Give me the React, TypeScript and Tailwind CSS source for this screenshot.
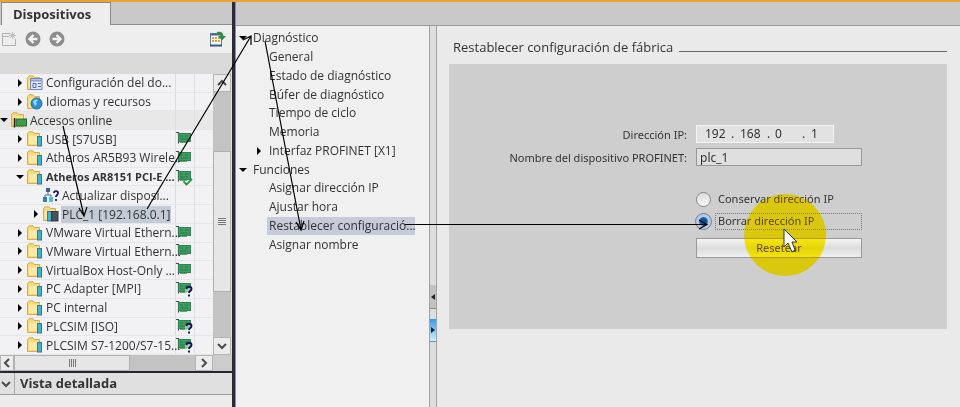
import React, { ReactNode } from "react";

type Badge = "none" | "card" | "ok" | "unknown";
type Kind = "config" | "lang" | "online" | "device" | "update" | "plc";
type Row = {
  label: string;
  kind: Kind;
  level: 0 | 1 | 2;
  arrow?: "right" | "down";
  badge?: Badge;
  bold?: boolean;
  selected?: boolean;
};

const rows: Row[] = [
  { label: "Configuración del do...", kind: "config", level: 1, arrow: "right" },
  { label: "Idiomas y recursos", kind: "lang", level: 1, arrow: "right" },
  { label: "Accesos online", kind: "online", level: 0, arrow: "down" },
  { label: "USB [S7USB]", kind: "device", level: 1, arrow: "right", badge: "card" },
  { label: "Atheros AR5B93 Wirele...", kind: "device", level: 1, arrow: "right", badge: "card" },
  { label: "Atheros AR8151 PCI-E ...", kind: "device", level: 1, arrow: "down", badge: "ok", bold: true },
  { label: "Actualizar disposi...", kind: "update", level: 2 },
  { label: "PLC_1 [192.168.0.1]", kind: "plc", level: 2, arrow: "right", selected: true },
  { label: "VMware Virtual Ethern...", kind: "device", level: 1, arrow: "right", badge: "card" },
  { label: "VMware Virtual Ethern...", kind: "device", level: 1, arrow: "right", badge: "card" },
  { label: "VirtualBox Host-Only ...", kind: "device", level: 1, arrow: "right", badge: "card" },
  { label: "PC Adapter [MPI]", kind: "device", level: 1, arrow: "right", badge: "unknown" },
  { label: "PC internal", kind: "device", level: 1, arrow: "right", badge: "card" },
  { label: "PLCSIM [ISO]", kind: "device", level: 1, arrow: "right", badge: "unknown" },
  { label: "PLCSIM S7-1200/S7-15...", kind: "device", level: 1, arrow: "right", badge: "unknown" },
];

type NavItem = { label: string; level: 0 | 1; arrow?: "right" | "down"; selected?: boolean };

const nav: NavItem[] = [
  { label: "Diagnóstico", level: 0, arrow: "down" },
  { label: "General", level: 1 },
  { label: "Estado de diagnóstico", level: 1 },
  { label: "Búfer de diagnóstico", level: 1 },
  { label: "Tiempo de ciclo", level: 1 },
  { label: "Memoria", level: 1 },
  { label: "Interfaz PROFINET [X1]", level: 1, arrow: "right" },
  { label: "Funciones", level: 0, arrow: "down" },
  { label: "Asignar dirección IP", level: 1 },
  { label: "Ajustar hora", level: 1 },
  { label: "Restablecer configuració...", level: 1, selected: true },
  { label: "Asignar nombre", level: 1 },
];

function Arrow({ dir }: { dir?: "right" | "down" }) {
  return (
    <svg viewBox="0 0 8 8" className="size-2 shrink-0" aria-hidden="true">
      {dir === "right" && <path d="M2 0L6 4L2 8Z" fill="#000" />}
      {dir === "down" && <path d="M0 2H8L4 6Z" fill="#000" />}
    </svg>
  );
}

function RowIcon({ kind }: { kind: Kind }) {
  if (kind === "update") {
    return (
      <svg viewBox="0 0 16 16" className="size-4 shrink-0" aria-hidden="true">
        <path d="M5 5V8M2 11V8H8V11" fill="none" stroke="#47739a" />
        <rect x="3" y="1" width="4" height="4" fill="#3c5c9c" />
        <rect x="0" y="10" width="4" height="5" fill="#3a7fa8" />
        <rect x="6" y="10" width="4" height="5" fill="#4fc0d8" />
        <path d="M11 6C11 3.500 15 3.500 15 6C15 8 13 8 13 10M13 12V14" fill="none" stroke="#1c1c5c" strokeWidth="1.800" />
      </svg>
    );
  }
  return (
    <svg viewBox="0 0 16 16" className="size-4 shrink-0" aria-hidden="true">
      <path d="M0.500 2.500L2 0.800H6L7.500 2.500H12.500V14.500H0.500Z" fill="#f5d878" stroke="#d3ad55" />
      <path d="M2 4.500H12V13H2Z" fill="#fbe9a4" />
      {kind === "device" && <rect x="10.500" y="5.500" width="4" height="9.500" fill="#39b6d2" stroke="#41738a" />}
      {kind === "plc" && (
        <>
          <rect x="4.500" y="5.500" width="4" height="9.500" fill="#39b6d2" stroke="#41738a" />
          <rect x="8.500" y="5.500" width="6.500" height="9.500" fill="#46525e" stroke="#303b46" />
        </>
      )}
      {kind === "config" && (
        <>
          <rect x="3.500" y="3.500" width="11.500" height="11" fill="#dfe6f7" stroke="#7386bb" />
          <path d="M4 5.500H15" stroke="#8da0d5" strokeWidth="2" />
          <path d="M6 8.500H9V12.500H6ZM11 8.500H14M11 11.500H14" fill="none" stroke="#5a6db0" />
        </>
      )}
      {kind === "lang" && (
        <>
          <circle cx="9.500" cy="9.500" r="5.500" fill="#2b8fd6" stroke="#1c65ad" />
          <path d="M6 8C7 5 10 5 11 6L9 8L10 10L8 12Z" fill="#9fd9ef" />
        </>
      )}
      {kind === "online" && (
        <>
          <rect x="5" y="7" width="10.500" height="7" fill="#3f9a4c" stroke="#236b35" />
          <path d="M3.500 6V15.500" stroke="#222" strokeWidth="1.500" />
          <path d="M7 15H13" stroke="#c7b44b" strokeDasharray="1 1" />
        </>
      )}
    </svg>
  );
}

function CardIcon({ badge }: { badge?: Badge }) {
  if (!badge || badge === "none") return null;
  return (
    <svg viewBox="0 0 17 18" className="h-[18px] w-[17px]" aria-hidden="true">
      <path d="M0 2.500H2.500V13.500" fill="none" stroke="#39524a" strokeWidth="1.200" />
      <rect x="2.500" y="3.500" width="12" height="8" fill="#3b9d61" stroke="#2f8552" />
      <path d="M4 6H7M9 6H12M4 9H12" stroke="#2a7a49" />
      <path d="M4 12.500H11" stroke="#6ca06c" />
      {badge === "ok" && <path d="M7.500 13.500L10.500 16.500L16 11" fill="none" stroke="#2b9349" strokeWidth="1.800" />}
      {badge === "unknown" && (
        <>
          <path d="M9 8H17V18H9Z" fill="#f0f1f3" opacity="0.500" />
          <path d="M10.500 9C10.500 6 15.500 6 15.500 9C15.500 11 13 11 13 13M13 14.500V16.500" fill="none" stroke="#14144e" strokeWidth="1.900" />
        </>
      )}
    </svg>
  );
}

function Chevron({ dir }: { dir: "up" | "down" | "left" | "right" }) {
  const d = {
    up: "M2 8L6 4L10 8",
    down: "M2 4L6 8L10 4",
    left: "M8 2L4 6L8 10",
    right: "M4 2L8 6L4 10",
  }[dir];
  return (
    <svg viewBox="0 0 12 12" className="size-3" aria-hidden="true">
      <path d={d} fill="none" stroke="#4a4a4a" strokeWidth="2" />
    </svg>
  );
}

function ScrollButton({ dir, className }: { dir: "up" | "down" | "left" | "right"; className: string }) {
  return (
    <button
      aria-label={`Desplazar ${dir}`}
      className={`flex shrink-0 items-center justify-center border border-[#b4b4b4] bg-[#ececec] ${className}`}
    >
      <Chevron dir={dir} />
    </button>
  );
}

function RoundArrow({ flip, label }: { flip?: boolean; label: string }) {
  return (
    <button aria-label={label}>
      <svg viewBox="0 0 16 16" className={flip ? "size-4 rotate-180" : "size-4"} aria-hidden="true">
        <circle cx="8" cy="8" r="7.500" fill="#8d8d8d" />
        <path d="M12.500 8H5M8.500 4L4.500 8L8.500 12" fill="none" stroke="#f4f4f4" strokeWidth="2.400" />
      </svg>
    </button>
  );
}

function Toolbar() {
  return (
    <div className="flex h-[28px] shrink-0 items-center gap-2 bg-[#eeeeee] pr-[6px] pl-px">
      <button aria-label="Nuevo">
        <svg viewBox="0 0 16 16" className="size-4" aria-hidden="true">
          <path d="M9 2.500H1.500V14.500H14.500V8M1.500 5.500H8" fill="none" stroke="#b0b0b0" />
          <path d="M11.500 1V8M8 4.500H15M9 2L14 7M14 2L9 7" stroke="#bdbdbd" />
        </svg>
      </button>
      <RoundArrow label="Atrás" />
      <RoundArrow label="Adelante" flip />
      <button aria-label="Mostrar vista" className="ml-auto">
        <svg viewBox="0 0 16 16" className="size-4" aria-hidden="true">
          <rect x="0.500" y="2.500" width="11" height="12" fill="#f7f7f7" stroke="#5c7da5" />
          <path d="M1 3.500H11" stroke="#44699c" strokeWidth="2" />
          <path d="M2 7H10M2 10H10" stroke="#e2a13c" strokeWidth="2" strokeDasharray="2 1" />
          <path d="M0 14.500H12" stroke="#34578a" strokeWidth="2" />
          <path d="M7 1C10 0 13.500 1 13.500 5H16L12 9.500L8 5H10.500C10.500 3 9 3 7 4Z" fill="#318c45" />
        </svg>
      </button>
    </div>
  );
}

function TreeRow({ row }: { row: Row }) {
  const indent = row.level === 0 ? "pl-0" : row.level === 1 ? "pl-4" : "pl-8";
  return (
    <li className={`flex min-h-0 flex-1 items-stretch border-b border-[#e6e6e8] ${row.level === 0 ? "bg-[#e8e8e9]" : ""}`}>
      <div className={`flex min-w-0 flex-1 items-center border-r border-[#dcdcdf] ${indent}`}>
        <Arrow dir={row.arrow} />
        <span className="ml-[3px] flex">
          <RowIcon kind={row.kind} />
        </span>
        <span
          className={`ml-[2px] px-[1px] leading-[17px] whitespace-nowrap ${row.bold ? "text-[11px] font-bold" : ""} ${
            row.selected ? "bg-[#c3cbd6]" : ""
          }`}
        >
          {row.label}
        </span>
      </div>
      <div className="flex w-[19px] shrink-0 items-center border-r border-[#e0e0e3]">
        <CardIcon badge={row.badge} />
      </div>
      <div className="w-[18px] shrink-0" />
    </li>
  );
}

function DevicesPanel() {
  return (
    <aside className="flex w-[232px] shrink-0 flex-col bg-[#ececec]">
      <div className="flex h-[23px] shrink-0 items-stretch bg-[#c9c9c9]">
        <h2 className="ml-px w-[110px] border border-b-0 border-[#888888] bg-[#eeeeee] pl-[11px] text-[13px] leading-[22px] font-bold">
          Dispositivos
        </h2>
        <div className="flex-1 border-b border-[#8d8d8d]" />
      </div>
      <Toolbar />
      <div className="h-[21px] shrink-0 bg-[#dadada]" />
      <div className="flex h-[281px] shrink-0">
        <ul className="flex min-w-0 flex-1 flex-col bg-[#f2f2f4]">
          {rows.map((row, i) => (
            <TreeRow key={i} row={row} />
          ))}
        </ul>
        <div className="flex w-[18px] shrink-0 flex-col bg-[#c3c3c3]">
          <ScrollButton dir="up" className="h-[18px]" />
          <div className="h-[59px] shrink-0" />
          <div className="flex flex-1 flex-col items-center justify-center gap-[1px] border border-[#b0b0b0] bg-[#e6e6e6]">
            <i className="h-px w-2 bg-[#777777]" />
            <i className="h-px w-2 bg-[#777777]" />
            <i className="h-px w-2 bg-[#777777]" />
            <i className="h-px w-2 bg-[#777777]" />
          </div>
          <div className="h-[45px] shrink-0" />
          <ScrollButton dir="down" className="h-[18px]" />
        </div>
        <div className="w-px bg-[#dddddd]" />
      </div>
      <div className="flex h-[16px] shrink-0 bg-[#c3c3c3]">
        <ScrollButton dir="left" className="w-[14px]" />
        <div className="flex w-[116px] items-center justify-center gap-[1px] border border-[#b0b0b0] bg-[#e6e6e6]">
          <i className="h-2 w-px bg-[#777777]" />
          <i className="h-2 w-px bg-[#777777]" />
          <i className="h-2 w-px bg-[#777777]" />
          <i className="h-2 w-px bg-[#777777]" />
        </div>
        <div className="flex-1" />
        <ScrollButton dir="right" className="w-[18px]" />
        <div className="w-[19px] bg-[#cccccc]" />
      </div>
      <button className="flex h-[24px] shrink-0 items-stretch border-t-2 border-b border-t-[#26262e] border-b-[#9b9b9b] bg-[#e0e0e0] text-left text-[13px] font-bold">
        <span className="flex w-[15px] items-center border-r border-[#aaaaaa]">
          <Chevron dir="down" />
        </span>
        <span className="pl-[5px] leading-[21px]">Vista detallada</span>
      </button>
      <div className="min-h-6 flex-1" />
    </aside>
  );
}

function FunctionsNav() {
  return (
    <nav className="w-[193px] shrink-0 bg-[#f0f0f0] pt-[3px] pl-[3px]">
      <ul className="flex h-[225px] flex-col">
        {nav.map((item) => (
          <li key={item.label} className={`flex min-h-0 flex-1 items-center ${item.level ? "pl-4" : ""}`}>
            <Arrow dir={item.arrow} />
            <a
              href="#"
              className={`ml-[4px] py-px pl-[2px] leading-[16px] whitespace-nowrap ${
                item.selected ? "w-[148px] bg-[#c5cbd8]" : ""
              }`}
            >
              {item.label}
            </a>
          </li>
        ))}
      </ul>
    </nav>
  );
}

function Splitter() {
  return (
    <div className="flex w-[8px] shrink-0 flex-col border-x border-[#a2a2a2] bg-[#dedede] pt-[259px]">
      <button aria-label="Contraer" className="flex h-[24px] items-center border-b border-[#8a8a8a] bg-[#c2c2c2]">
        <svg viewBox="0 0 6 6" className="size-[6px]" aria-hidden="true">
          <path d="M5 0V6L1 3Z" fill="#222" />
        </svg>
      </button>
      <button
        aria-label="Expandir"
        className="mt-[10px] flex h-[23px] items-center border-b border-[#5b93b5] bg-linear-to-b from-[#2f9be6] to-[#cfeefc]"
      >
        <svg viewBox="0 0 6 6" className="size-[6px]" aria-hidden="true">
          <path d="M1 0V6L5 3Z" fill="#123" />
        </svg>
      </button>
    </div>
  );
}

function Field({ id, label, children }: { id: string; label: string; children: ReactNode }) {
  return (
    <div className="flex items-center">
      <label htmlFor={id} className="w-[238px] shrink-0 pt-[2px] text-right text-[11px]">
        {label}
      </label>
      <div className="ml-[9px] flex">{children}</div>
    </div>
  );
}

const radioClass =
  "size-[15px] shrink-0 appearance-none rounded-full border border-[#858585] bg-linear-to-b from-[#dcdcdc] to-[#fafafa] checked:border-[3px] checked:border-[#b5cbe0] checked:bg-radial checked:from-[#0d4f96] checked:from-40% checked:to-[#4ba3e0] checked:outline checked:outline-[#67809a]";

function FactoryReset() {
  return (
    <main className="min-w-0 flex-1 bg-[#eaeaea] pt-[12px] pr-[13px] pl-[12px]">
      <div className="flex items-end pl-1">
        <h1 className="text-[13px] leading-[18px] whitespace-nowrap">Restablecer configuración de fábrica</h1>
        <div className="mb-1 ml-[6px] flex-1 border-b border-[#6a6a6a]" />
      </div>
      <form
        className="mt-[8px] h-[265px] bg-[#cecece] pt-[61px] font-['Noto_Sans','Open_Sans',sans-serif]"
        onSubmit={(e) => e.preventDefault()}
      >
        <Field id="ip" label="Dirección IP:">
          <fieldset className="flex h-[18px] w-[138px] items-center border border-[#f4f4f4] bg-[#e2e2e2] pl-2">
            <input id="ip" defaultValue="192" className="w-[26px]" />
            <span className="w-[9px]">.</span>
            <input aria-label="Segundo octeto" defaultValue="168" className="w-[27px]" />
            <span className="w-[8px]">.</span>
            <input aria-label="Tercer octeto" defaultValue="0" className="w-[27px]" />
            <span className="w-[9px]">.</span>
            <input aria-label="Cuarto octeto" defaultValue="1" className="w-[20px]" />
          </fieldset>
        </Field>
        <div className="mt-[5px]">
          <Field id="name" label="Nombre del dispositivo PROFINET:">
            <input id="name" defaultValue="plc_1" className="h-[18px] w-[166px] border border-[#999999] bg-[#dfdfdf] pl-[3px]" />
          </Field>
        </div>
        <div className="mt-[24px] ml-[247px] flex w-[166px] flex-col text-[11px]">
          <label className="flex h-[18px] items-center">
            <input type="radio" name="mode" className={radioClass} />
            <span className="ml-[7px]">Conservar dirección IP</span>
          </label>
          <label className="mt-[4px] flex h-[18px] items-center">
            <input type="radio" name="mode" defaultChecked className={radioClass} />
            <span className="ml-[4px] h-[17px] flex-1 border border-dotted border-[#777777] pl-[2px] leading-[13px]">
              Borrar dirección IP
            </span>
          </label>
          <button
            type="submit"
            className="mt-[8px] h-[20px] border border-[#999999] bg-linear-to-b from-[#f4f4f4] via-[#dcdcdc] via-50% to-[#f0f0f0] leading-[18px]"
          >
            Resetear
          </button>
        </div>
      </form>
    </main>
  );
}

function Annotations() {
  return (
    <>
      <div className="pointer-events-none absolute top-[194px] left-[744px] size-[82px] rounded-full bg-[#fff010] mix-blend-multiply" />
      <div className="pointer-events-none absolute top-[194px] left-[744px] size-[82px] rounded-full bg-[#3a1800] mix-blend-screen" />
      <svg viewBox="0 0 960 407" className="pointer-events-none absolute top-0 left-0 h-[407px] w-[960px]" aria-hidden="true">
        <g fill="none" stroke="#000" strokeWidth="1.200">
          <path d="M63 126L84 216M79 208L84 216L87 207" />
          <path d="M147 209L251 36M243 40L251 36L251 45" />
          <path d="M265 41L301 230M296 222L301 230L304 221" />
          <path d="M405 224.500H707M699 220L707 224.500L699 229" />
        </g>
        <path d="M784 229V247L788 243L792 252L795 250L792 242H797Z" fill="#fff" stroke="#333" />
      </svg>
    </>
  );
}

export default function App() {
  return (
    <div className="relative isolate flex min-h-screen flex-col overflow-hidden bg-[#eaeaea] font-['Open_Sans','Noto_Sans',sans-serif] text-[12px] leading-[16px] text-[#333333]">
      <div className="h-[2px] shrink-0 bg-[#f0a030]" />
      <div className="flex flex-1">
        <DevicesPanel />
        <div className="w-[4px] shrink-0 border-r border-[#8d8d99] bg-[#2a2a38]" />
        <div className="flex min-w-0 flex-1 flex-col">
          <div className="h-[24px] shrink-0 border-b border-[#9b9b9b] bg-[#c9c9c9]" />
          <div className="flex flex-1">
            <FunctionsNav />
            <Splitter />
            <FactoryReset />
          </div>
        </div>
      </div>
      <Annotations />
    </div>
  );
}
